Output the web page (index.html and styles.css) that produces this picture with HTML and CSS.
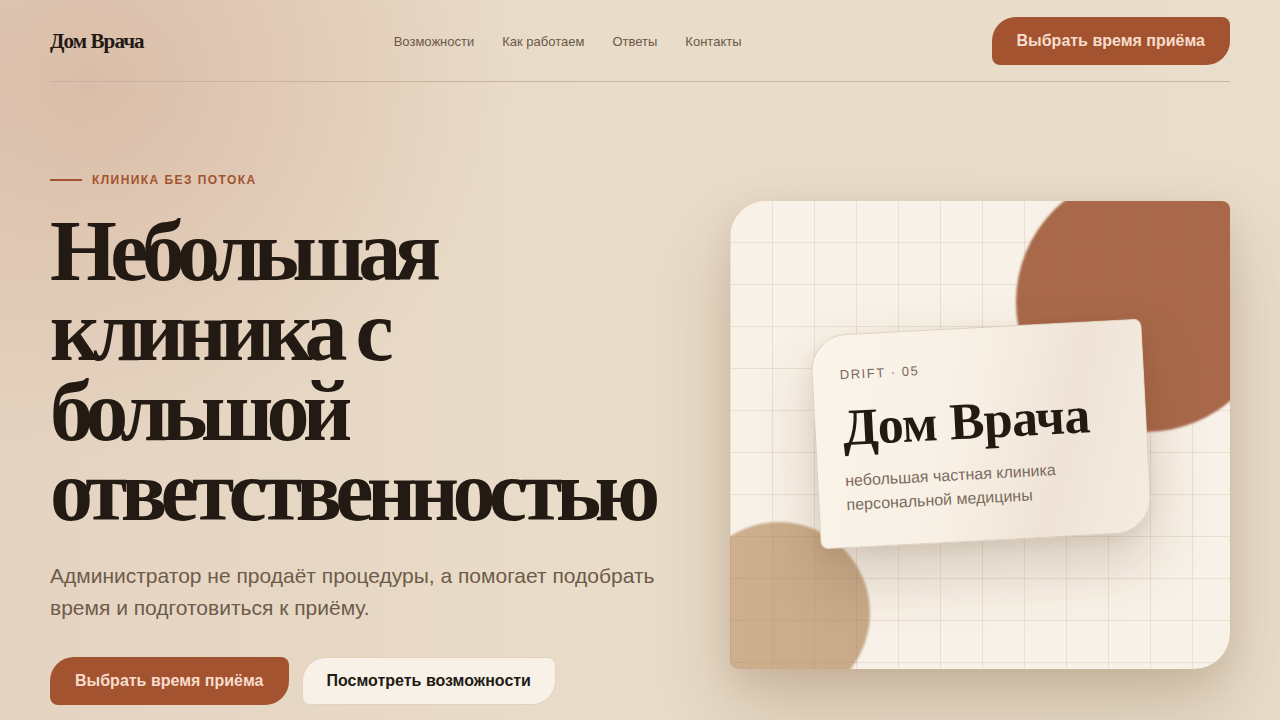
FILE: index.html
```html
<!DOCTYPE html>
<html lang="ru">
<head>
<meta charset="utf-8">
<title>Дом Врача</title>
<link rel="stylesheet" href="styles.css">
</head>
<body>
<div class="page">
  <header class="header">
    <a class="logo" href="#">Дом Врача</a>
    <nav class="nav">
      <a href="#">Возможности</a>
      <a href="#">Как работаем</a>
      <a href="#">Ответы</a>
      <a href="#">Контакты</a>
    </nav>
    <a class="btn btn-primary" href="#">Выбрать время приёма</a>
  </header>
  <main class="hero">
    <div class="hero-text">
      <div class="eyebrow"><span class="eyebrow-line"></span>КЛИНИКА БЕЗ ПОТОКА</div>
      <h1 class="title">Небольшая<br>клиника с<br>большой<br>ответственностью</h1>
      <p class="lead">Администратор не продаёт процедуры, а помогает подобрать время и подготовиться к приёму.</p>
      <div class="actions">
        <a class="btn btn-primary" href="#">Выбрать время приёма</a>
        <a class="btn btn-secondary" href="#">Посмотреть возможности</a>
      </div>
    </div>
    <div class="visual">
      <div class="circle circle-big"></div>
      <div class="circle circle-tan"></div>
      <div class="grid"></div>
      <div class="note">
        <div class="note-tag">DRIFT · 05</div>
        <div class="note-title">Дом Врача</div>
        <div class="note-sub">небольшая частная клиника<br>персональной медицины</div>
      </div>
    </div>
  </main>
</div>
</body>
</html>
```
FILE: styles.css
```css
* { box-sizing: border-box; }
html, body { margin: 0; padding: 0; }
body {
  width: 1280px;
  height: 720px;
  overflow: hidden;
  font-family: "Liberation Sans", Arial, sans-serif;
  color: #231a14;
  background:
    radial-gradient(ellipse 420px 380px at 90px 80px, rgba(214, 180, 158, 0.7) 0%, rgba(214, 180, 158, 0) 100%),
    linear-gradient(90deg, #e4d3c0 0%, #e9dcc8 45%, #e9decb 100%);
}
a { text-decoration: none; color: inherit; }
.page { padding: 0 50px; }

.header {
  display: flex;
  align-items: center;
  justify-content: space-between;
  padding: 17px 0 16px;
  border-bottom: 1px solid #c9b39f;
}
.logo {
  font-family: "Liberation Serif", "Times New Roman", serif;
  font-weight: 700;
  font-size: 21px;
  letter-spacing: -0.9px;
  color: #231a14;
}
.nav { display: flex; gap: 28px; }
.nav a { font-size: 13px; color: #6b5848; }

.btn {
  display: inline-flex;
  align-items: center;
  justify-content: center;
  height: 48px;
  padding: 0 25px;
  font-size: 16px;
  font-weight: 700;
  border-radius: 24px 8px 24px 8px;
}
.btn-primary { background: #a3532f; color: #f8dccb; }
.btn-secondary {
  background: #f8f1e8;
  color: #231a14;
  border: 1px solid #e2d3c1;
  padding: 0 24px;
}

.hero {
  display: grid;
  grid-template-columns: 1fr 500px;
  align-items: start;
  padding-top: 91px;
}
.eyebrow {
  display: flex;
  align-items: center;
  gap: 10px;
  font-size: 12px;
  line-height: 14px;
  font-weight: 700;
  letter-spacing: 0.12em;
  color: #a3532f;
}
.eyebrow-line { width: 32px; height: 2px; background: #a3532f; }
.title {
  margin: 24px 0 0;
  font-family: "Liberation Serif", "Times New Roman", serif;
  font-weight: 700;
  font-size: 86px;
  line-height: 80px;
  letter-spacing: -6.7px;
  color: #231a14;
}
.lead {
  margin: 29px 0 0;
  width: 640px;
  font-size: 21px;
  line-height: 32px;
  color: #6e5b4b;
}
.actions { display: flex; gap: 13px; margin-top: 33px; }

.visual {
  position: relative;
  margin-top: 28px;
  height: 468px;
  border-radius: 36px 8px 36px 8px;
  background: #f8f1e7;
  overflow: hidden;
  box-shadow: 0 40px 80px rgba(120, 85, 50, 0.25), 0 10px 30px rgba(120, 85, 50, 0.12);
}
.grid {
  position: absolute;
  inset: 0;
  background-image:
    linear-gradient(90deg, rgba(150, 120, 90, 0.15) 1px, transparent 1px),
    linear-gradient(0deg, rgba(150, 120, 90, 0.15) 1px, transparent 1px);
  background-size: 42px 42px;
}
.circle { position: absolute; border-radius: 50%; filter: blur(0.8px); }
.circle-big {
  left: 286px; top: -29px;
  width: 260px; height: 260px;
  background: #a9684a;
}
.circle-tan {
  left: -42px; top: 321px;
  width: 182px; height: 182px;
  background: linear-gradient(90deg, #cfb08f, #c8aa89);
}
.note {
  position: absolute;
  left: 85px; top: 126px;
  width: 332px; height: 214px;
  padding: 32px 30px 30px 27px;
  transform: rotate(-3deg);
  border-radius: 36px 8px 36px 8px;
  background: linear-gradient(105deg, #faf4ea 0%, #f8f0e5 45%, #efe3d6 72%, #f5ede2 100%);
  border: 1px solid rgba(200, 180, 155, 0.5);
  box-shadow: 0 30px 60px rgba(90, 60, 30, 0.2), 0 6px 16px rgba(90, 60, 30, 0.08);
}
.note-tag {
  font-size: 13px;
  line-height: 15px;
  letter-spacing: 0.12em;
  color: #7b6b5e;
}
.note-title {
  margin-top: 18px;
  font-family: "Liberation Serif", "Times New Roman", serif;
  font-weight: 700;
  font-size: 52px;
  line-height: 56px;
  letter-spacing: -0.01em;
  color: #231a14;
  white-space: nowrap;
}
.note-sub {
  margin-top: 13px;
  font-size: 16px;
  line-height: 24px;
  color: #7b6b5e;
}
```
